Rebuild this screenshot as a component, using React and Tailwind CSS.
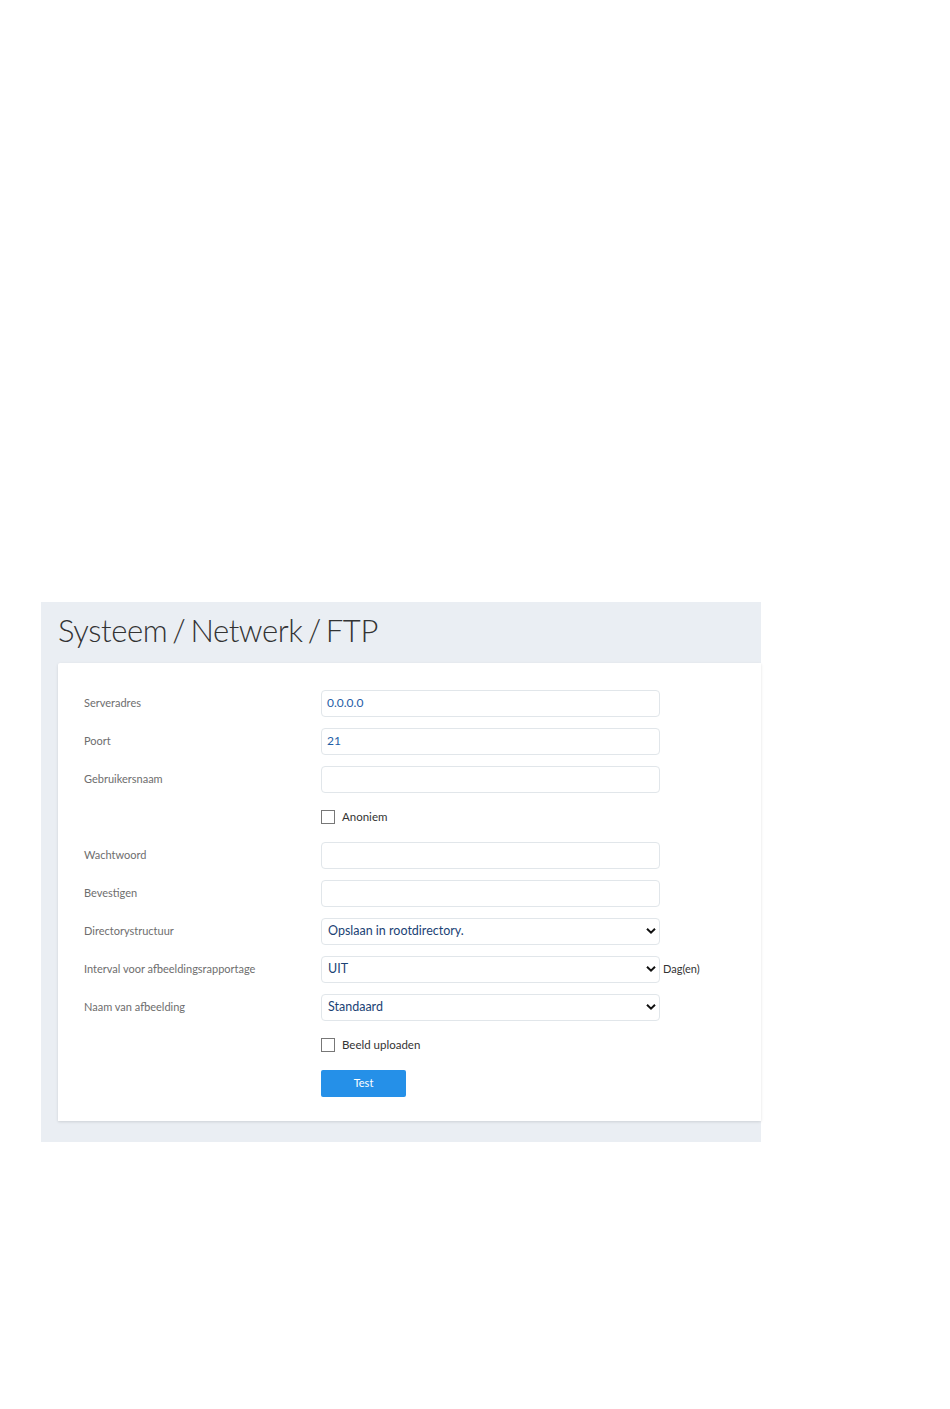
import React from "react";

const Chevron = () => (
  <svg width="10" height="7" viewBox="0 0 10 7" className="absolute right-[3px] top-1/2 -translate-y-1/2">
    <path d="M1 1.2 L5 5.2 L9 1.2" fill="none" stroke="#111" strokeWidth="2" />
  </svg>
);

const Row = ({ label, children }) => (
  <div className="flex items-center h-[26px] mb-[12px]">
    <div className="w-[237px] text-[11px] text-[#6e6e6e]">{label}</div>
    <div className="flex items-center">{children}</div>
  </div>
);

const Input = ({ value }) => (
  <div className="w-[339px] h-[27px] border border-[#e1e6ea] rounded-[4px] bg-white flex items-center px-[5px] text-[12px] text-[#1f5ea6]">
    {value}
  </div>
);

const Select = ({ value }) => (
  <div className="relative w-[339px] h-[27px] border border-[#e1e6ea] rounded-[4px] bg-white flex items-center px-[6px] text-[12.5px] text-[#1b4375]">
    {value}
    <Chevron />
  </div>
);

const Check = ({ label }) => (
  <div className="flex items-center">
    <div className="w-[14px] h-[14px] border border-[#777] bg-white" />
    <span className="ml-[7px] text-[11.5px] text-[#333]">{label}</span>
  </div>
);

export default function App() {
  return (
    <div className="bg-white min-h-[1409px] pt-[602px] pl-[41px]" style={{ fontFamily: "Lato, 'Open Sans', sans-serif" }}>
      <div className="w-[720px] bg-[#eaeef3] pb-[21px]">
        <div className="h-[61px] pl-[17px] flex items-center">
          <h1 className="text-[31px] font-light text-[#333] tracking-[-0.4px] [word-spacing:-3px] leading-none -mt-[5px]">Systeem / Netwerk / FTP</h1>
        </div>
        <div className="ml-[17px] bg-white rounded-tl-[2px] shadow-[0_1px_3px_rgba(0,0,0,0.12)] pt-[27px] pb-[24px] pl-[26px]">
          <Row label="Serveradres"><Input value="0.0.0.0" /></Row>
          <Row label="Poort"><Input value="21" /></Row>
          <Row label="Gebruikersnaam"><Input value="" /></Row>
          <Row label=""><Check label="Anoniem" /></Row>
          <Row label="Wachtwoord"><Input value="" /></Row>
          <Row label="Bevestigen"><Input value="" /></Row>
          <Row label="Directorystructuur"><Select value="Opslaan in rootdirectory." /></Row>
          <Row label="Interval voor afbeeldingsrapportage">
            <Select value="UIT" />
            <span className="ml-[3px] text-[11px] text-[#333]">Dag(en)</span>
          </Row>
          <Row label="Naam van afbeelding"><Select value="Standaard" /></Row>
          <Row label=""><Check label="Beeld uploaden" /></Row>
          <div className="flex">
            <div className="w-[237px]" />
            <button className="w-[85px] h-[27px] bg-[#2590e8] rounded-[2px] text-white text-[11px]">Test</button>
          </div>
        </div>
      </div>
    </div>
  );
}
